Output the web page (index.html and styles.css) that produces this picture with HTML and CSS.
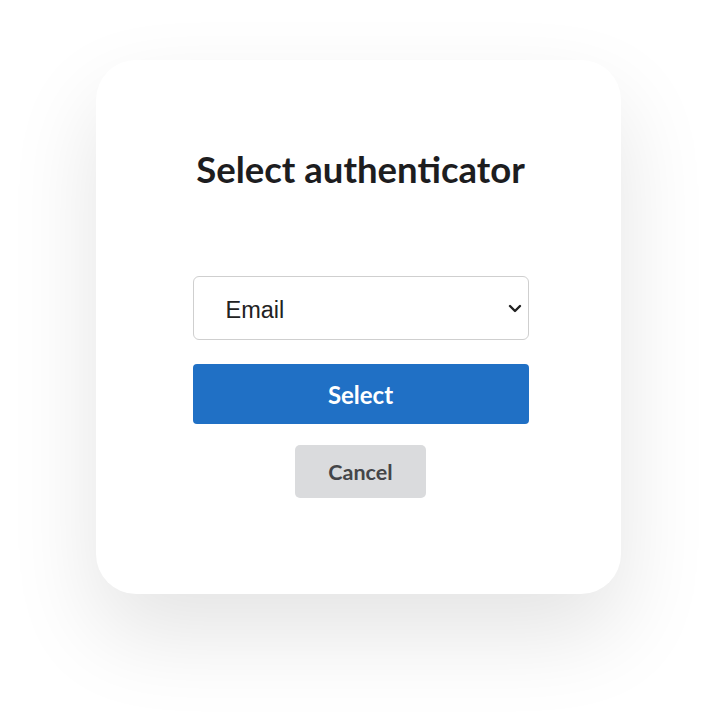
FILE: index.html
```html
<!DOCTYPE html>
<html lang="en">
<head>
<meta charset="utf-8">
<title>Select authenticator</title>
<link rel="stylesheet" href="styles.css">
</head>
<body>
<main class="page">
  <section class="card">
    <h1 class="title">Select authenticator</h1>
    <form class="form">
      <div class="select-wrap">
        <select class="select">
          <option>Email</option>
          <option>SMS</option>
        </select>
        <svg class="chevron" width="14" height="9" viewBox="0 0 14 9" aria-hidden="true">
          <path d="M2 2 L7 7 L12 2" fill="none" stroke="#222" stroke-width="2.4" stroke-linecap="round" stroke-linejoin="round"/>
        </svg>
      </div>
      <button type="button" class="btn btn-primary">Select</button>
      <button type="button" class="btn btn-cancel">Cancel</button>
    </form>
  </section>
</main>
</body>
</html>
```

FILE: styles.css
```css
html, body {
  margin: 0;
  padding: 0;
  background: #ffffff;
}

.page {
  width: 717px;
  height: 726px;
  box-sizing: border-box;
  padding-top: 60px;
  display: flex;
  justify-content: center;
  align-items: flex-start;
}

.card {
  width: 525px;
  height: 534px;
  box-sizing: border-box;
  background: #ffffff;
  border-radius: 40px;
  box-shadow: 0 40px 90px rgba(0, 0, 0, 0.11);
  display: flex;
  flex-direction: column;
  align-items: center;
  padding-top: 85px;
  padding-left: 4px;
}

.title {
  margin: 0;
  font-family: Lato, "Noto Sans", sans-serif;
  font-weight: 700;
  font-size: 36.5px;
  line-height: 48px;
  color: #1d1d1f;
}

.form {
  margin-top: 83px;
  width: 336px;
  display: flex;
  flex-direction: column;
  align-items: center;
}

.select-wrap {
  position: relative;
  width: 336px;
  height: 64px;
}

.select {
  appearance: none;
  -webkit-appearance: none;
  width: 100%;
  height: 100%;
  box-sizing: border-box;
  border: 1px solid #cfcfcf;
  border-radius: 6px;
  background: #ffffff;
  padding: 3px 0 0 32px;
  font-family: "Liberation Sans", Arial, sans-serif;
  font-size: 23.5px;
  color: #222222;
  outline: none;
}

.chevron {
  position: absolute;
  right: 7px;
  top: 28px;
}

.btn {
  border: none;
  font-family: Lato, "Noto Sans", sans-serif;
  font-weight: 700;
  cursor: pointer;
}

.btn-primary {
  margin-top: 24px;
  width: 336px;
  height: 60px;
  border-radius: 4px;
  background: #2070c5;
  color: #ffffff;
  font-size: 24px;
  padding-top: 2px;
}

.btn-cancel {
  margin-top: 21px;
  width: 131px;
  height: 53px;
  border-radius: 5px;
  background: #dadbdd;
  color: #444548;
  font-size: 21.5px;
}
```
